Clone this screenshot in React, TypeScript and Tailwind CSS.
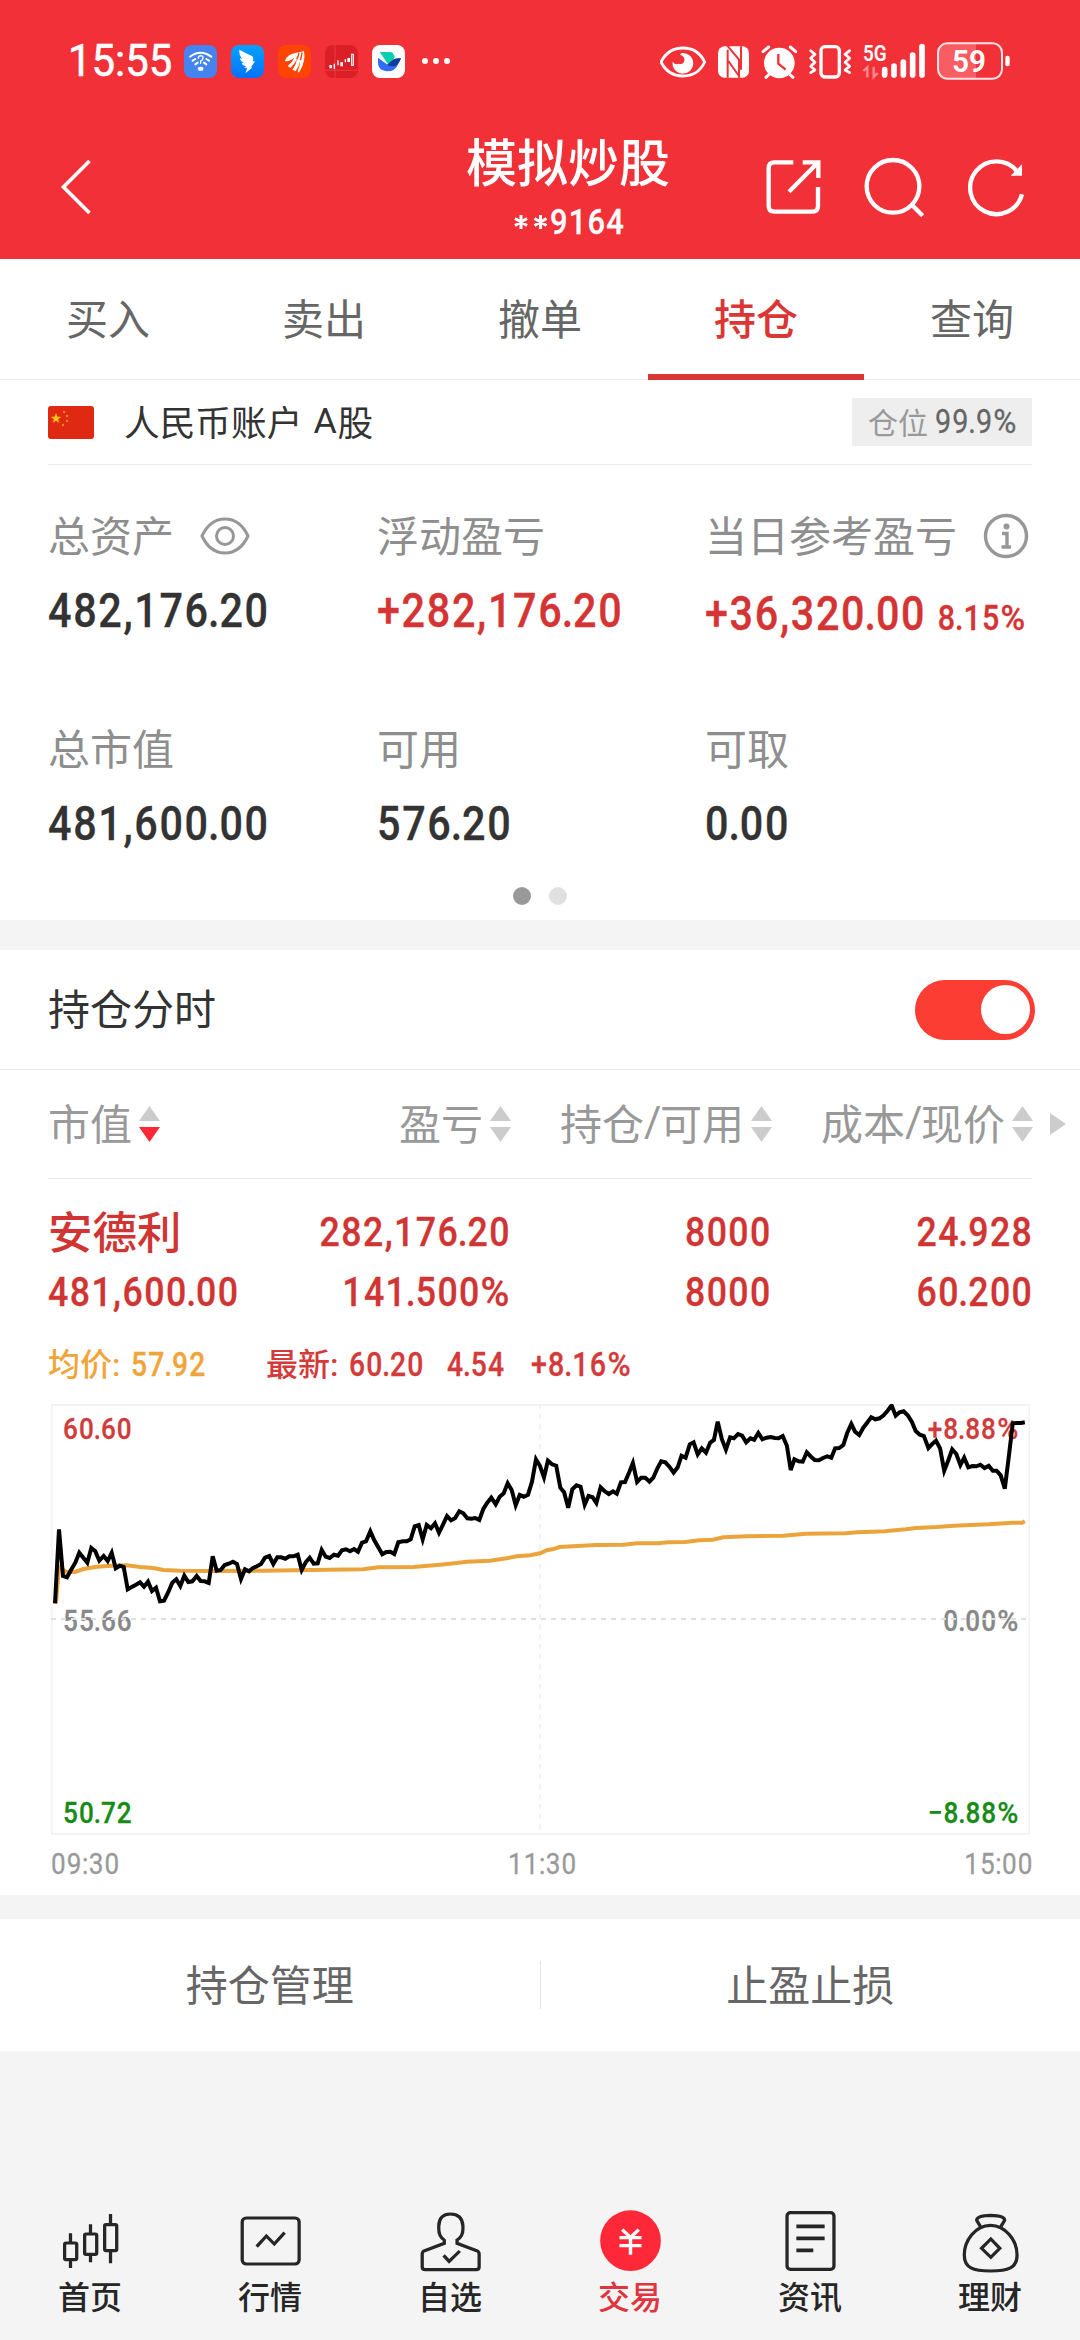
import React from 'react';
import type { ReactNode } from 'react';

type Point = [number, number];

/* Narrow DIN-like figures used for every amount in the app. */
function Num({ children, className = '', right = false }: { children: string; className?: string; right?: boolean }) {
  return (
    <span
      className={
        "inline-block scale-x-[0.87] whitespace-pre font-['Roboto','Noto_Sans_CJK_SC',sans-serif] tracking-[0.04em] [-webkit-text-stroke-width:0.3px] " +
        (right ? 'origin-right -mr-[0.04em] ' : 'origin-left ') +
        (className.includes('font-normal') ? '' : 'font-medium ') +
        className
      }
    >
      {children.split(/([.,%:+])/).map((part, i) => {
        if (part === '.') return <span key={i} className="-mx-[0.042em]">.</span>;
        if (part === ':') return <span key={i} className="-mx-[0.02em]">:</span>;
        if (part === '%') return <span key={i} className="mr-[0.07em] inline-block origin-left scale-x-[1.1]">%</span>;
        return part;
      })}
    </span>
  );
}

function StatusBar() {
  return (
    <div className="flex h-[122px] items-center pl-[68px] pr-[70px] text-white">
      <span className="w-[116px] shrink-0">
        <span className="inline-block origin-left scale-x-[0.93] font-['Roboto',sans-serif] text-[45px] leading-[62px] [-webkit-text-stroke-width:0.6px]">15:55</span>
      </span>
      <div className="flex items-center gap-[14px]">
        <svg width="33" height="33" viewBox="432 75 99 99">
          <rect x="432" y="75" width="99" height="99" rx="24" fill="#4583ee" />
          <g fill="none" stroke="#fff" strokeWidth="6" strokeLinecap="round">
            <path d="M450 110 Q481 86 514 110" />
            <path d="M458 122 L466 117 M466 133 L473 128 M507 122 L499 117 M499 133 L492 128" />
            <path d="M475 115 Q475 107 482 107 Q490 108 489 115 Q488 120 482 123 L482 130" strokeWidth="4" />
          </g>
          <path d="M473 143 Q482 137 491 143 L488 152 H476Z" fill="#fff" />
        </svg>
        <svg width="33" height="33" viewBox="574 75 99 99">
          <defs>
            <linearGradient id="wing" x1="0" y1="0" x2="0" y2="1">
              <stop offset="0" stopColor="#04a2ff" />
              <stop offset="1" stopColor="#0670fb" />
            </linearGradient>
          </defs>
          <rect x="574" y="75" width="99" height="99" rx="24" fill="url(#wing)" />
          <path d="M599 89 Q622 101 638 109 Q643 114 639 124 H646 L635 140 L637 143 L617 160 L623 143 L614 144 L619 138 Q608 137 606 130 L613 129 Q601 123 601 115 L608 116 Q597 105 599 89Z" fill="#fff" />
        </svg>
        <svg width="33" height="33" viewBox="714 75 99 99">
          <rect x="714" y="75" width="99" height="99" rx="24" fill="#ff4300" />
          <path d="M734 124 Q742 102 766 99 Q784 96 792 93 Q797 120 783 147 L776 158 L773 154 Q780 137 781 121 Q777 141 767 154 L757 149 Q768 136 771 118 Q762 134 751 144 L743 138 Q757 127 763 113 Q751 124 734 124Z" fill="#fff" />
          <path d="M777 99 Q775 109 770 118 M786 97 Q785 111 781 121" stroke="#ff4300" strokeWidth="4" fill="none" />
        </svg>
        <svg width="33" height="33" viewBox="855 75 99 99">
          <rect x="855" y="75" width="99" height="99" rx="24" fill="#dc1e26" />
          <path d="M855 151 H954 M885 75 V174" stroke="#e8454a" strokeWidth="2.500" />
          <path d="M872 135 V145 M905 127 V139 M926 114 V126" stroke="#fff" strokeWidth="8" />
          <path d="M883 131 V147 M894 121 V136 M916 118 V127" stroke="#fff" strokeWidth="4" />
          <rect x="935" y="103" width="5" height="33" fill="none" stroke="#fff" strokeWidth="3.500" />
        </svg>
        <svg width="33" height="33" viewBox="996 75 99 99">
          <rect x="996" y="75" width="99" height="99" rx="24" fill="#fff" />
          <path d="M1019 96 H1053 Q1063 101 1064 113 L1045 134Z" fill="#06cfb0" />
          <path d="M1014 113 Q1027 123 1043 134 L1059 119 Q1070 114 1083 115 Q1079 122 1075 131 Q1067 154 1040 154 Q1014 150 1014 130Z" fill="#326bf6" />
          <path d="M1041 135 L1058 120 Q1068 113 1083 115 Q1076 133 1068 137 Q1055 141 1041 135Z" fill="#133d9b" />
        </svg>
      </div>
      <div className="ml-[17px] flex gap-[5px]">
        <i className="size-[6px] rounded-full bg-white" />
        <i className="size-[6px] rounded-full bg-white" />
        <i className="size-[6px] rounded-full bg-white" />
      </div>
      <svg className="ml-auto" width="350" height="38" viewBox="57 65 1050 114" fill="none">
        <path d="M60 125 Q81 83 126 83 Q171 83 191 125 Q171 167 126 167 Q81 167 60 125Z" stroke="#fff" strokeWidth="8.500" />
        <path d="M122 98 A31 31 0 1 1 95 124 Q103 135 113 130 Q126 134 130 122 Q133 108 117 103Z" fill="#fff" />
        <rect x="231" y="78" width="93" height="94" rx="20" fill="#fff" />
        <path d="M259 76 L294 118 V172 M262 122 L296 170 M260 88 V172 M300 78 V148" stroke="#f23037" strokeWidth="6" />
        <circle cx="415" cy="128" r="46" fill="#fff" />
        <path d="M366 94 L383 80 M448 80 L464 94 M385 161 L375 171 M445 161 L456 171" stroke="#fff" strokeWidth="9" strokeLinecap="round" />
        <path d="M412 101 V130 L434 148" stroke="#f23037" strokeWidth="7" />
        <rect x="540" y="79" width="55" height="91" rx="12" stroke="#fff" strokeWidth="10" />
        <path d="M509 91 L522 102 L509 114 L522 126 L509 138 L522 149 L509 157 M626 91 L612 102 L626 114 L612 126 L626 138 L612 149 L626 157" stroke="#fff" strokeWidth="8" strokeLinecap="round" strokeLinejoin="round" />
        <text x="666" y="121" fill="#fff" fontFamily="Roboto" fontWeight="600" fontSize="66" textLength="71" lengthAdjust="spacingAndGlyphs">5G</text>
        <path d="M667 152 L679 141 V171 M698 140 V170 L710 158" stroke="#f88b8f" strokeWidth="7" />
        <path d="M731 148 V164 M759 137 V164 M787 125 V164 M815 104 V164 M843 79 V164" stroke="#fff" strokeWidth="17" strokeLinecap="round" />
        <path d="M1005 70 V174 H918 Q892 174 892 146 V98 Q892 70 918 70Z" fill="#f75d63" />
        <rect x="891" y="69" width="192" height="106" rx="28" stroke="#ffe3e4" strokeWidth="6" />
        <text x="933" y="155" fill="#fff" fontFamily="Roboto" fontWeight="600" fontSize="96" textLength="102" lengthAdjust="spacingAndGlyphs">59</text>
        <rect x="1093" y="106" width="13" height="32" rx="6" fill="#fff" />
      </svg>
    </div>
  );
}

function Header() {
  return (
    <header className="h-[259px] bg-[#f23037] text-white">
      <StatusBar />
      <div className="grid h-[130px] grid-cols-[403px_210px_1fr] items-center pl-[60px] pr-[55px]">
        <svg width="32" height="56" viewBox="0 0 32 56" fill="none" stroke="#fff" strokeWidth="3.6">
          <path d="M29.500 2 L3.500 28 L29.500 54" />
        </svg>
        <div className="flex w-[210px] flex-col items-center">
          <span className="whitespace-nowrap text-[51px] font-medium leading-[60px]">模拟炒股</span>
          <div className="mb-[-4px] mt-[6px] flex h-[52px] items-center pl-[2px]">
            <svg width="34" height="14" viewBox="0 0 34 14" stroke="#fff" strokeWidth="3">
              <path d="M7 0V14M1 3.500L13 10.500M1 10.500L13 3.500M26.500 0V14M20.500 3.500L32.500 10.500M20.500 10.500L32.500 3.500" />
            </svg>
            <span className="w-[76px] pl-[2px]">
              <Num className="text-[35.5px] leading-[52px]">9164</Num>
            </span>
          </div>
        </div>
        <div className="flex items-center justify-end gap-[43px]">
          <svg width="55" height="54" viewBox="74 60 165 162" fill="none" stroke="#fff" strokeWidth="13">
            <path d="M156 67 H99 Q82 67 82 84 V198 Q82 215 99 215 H213 Q230 215 230 198 V141" />
            <path d="M184 67 H231 V114 M231 67 L143 155" />
          </svg>
          <svg width="61" height="60" viewBox="370 49 183 180" fill="none" stroke="#fff" strokeWidth="13">
            <circle cx="457" cy="137" r="79" />
            <path d="M511 190 L546 225" />
          </svg>
          <svg width="57" height="59" viewBox="681 52 171 177" fill="none" stroke="#fff" strokeWidth="13">
            <path d="M843 161 A79 79 0 1 1 829 93" />
            <path d="M843 71 V105 H809Z" fill="#fff" stroke="none" />
          </svg>
        </div>
      </div>
    </header>
  );
}

function Tabs() {
  return (
    <nav className="grid h-[121px] grid-cols-5 border-b border-[#ebebeb] text-center text-[42px] leading-[115px] text-[#666]">
      {['买入', '卖出', '撤单', '持仓', '查询'].map((t) => (
        <div key={t} className={t === '持仓' ? 'border-b-[6px] border-[#d93635] font-medium text-[#d93635]' : ''}>
          {t}
        </div>
      ))}
    </nav>
  );
}

function Account() {
  return (
    <div className="mx-12 flex h-[85px] items-center border-b border-[#ebebeb]">
      <svg width="46" height="33" viewBox="0 0 46 33">
        <rect width="46" height="33" rx="3" fill="#df2912" />
        <path d="M8 7l1.300 3.800h4l-3.200 2.400 1.200 3.800L8 14.700 4.700 17l1.200-3.800-3.200-2.400h4z" fill="#f9c514" />
        <circle cx="16" cy="6" r="1.200" fill="#ef8a13" />
        <circle cx="19" cy="10" r="1.200" fill="#ef8a13" />
        <circle cx="19" cy="15" r="1.200" fill="#ef8a13" />
        <circle cx="15" cy="19" r="1.200" fill="#ef8a13" />
      </svg>
      <span className="ml-[30px] flex pb-[2px] text-[35.7px] leading-[60px] text-[#333]">
        人民币账户
        <span className="ml-[11px] inline-block w-[24px] font-['Roboto',sans-serif]">A</span>股
      </span>
      <div className="ml-auto flex h-12 w-[180px] items-center bg-[#eee] pl-[16px] text-[30px] leading-[44px] text-[#999]">
        <span className="pb-[3px]">仓位</span>
        <Num className="ml-[7px] text-[33px] font-normal text-[#666]">99.9%</Num>
      </div>
    </div>
  );
}

function Stat({ label, value, red, icon, extra }: { label: string; value: string; red?: boolean; icon?: ReactNode; extra?: string }) {
  return (
    <div>
      <div className="flex h-[60px] items-center whitespace-nowrap text-[42px] leading-[56px] text-[#8e8e8e]">
        <span className="pb-[4px]">{label}</span>
        {icon}
      </div>
      <div className={'mt-[15px] flex h-[59px] items-baseline whitespace-nowrap leading-[60px] ' + (red ? 'text-[#d43433] ' : 'text-[#333] ') + (extra ? 'pt-[3px]' : '')}>
        <span className={extra ? 'w-[231px] shrink-0' : ''}>
          <Num className="text-[47.5px]">{value}</Num>
        </span>
        {extra && <Num className="pl-[2px] text-[35px]">{extra}</Num>}
      </div>
    </div>
  );
}

const EyeIcon = (
  <svg className="ml-[26px]" width="50" height="38" viewBox="0 0 50 38" fill="none" stroke="#979797" strokeWidth="3">
    <path d="M2 19 Q10 2 25 2 Q40 2 48 19 Q40 36 25 36 Q10 36 2 19Z" />
    <circle cx="25" cy="19" r="8.500" />
  </svg>
);

const InfoIcon = (
  <svg className="mb-[1px] ml-[26px] shrink-0" width="46" height="46" viewBox="0 0 46 46" fill="none" stroke="#979797" strokeWidth="3.400">
    <circle cx="23" cy="23" r="20.500" />
    <path d="M19 20.500 H24 V34 M18.500 34 H28" />
    <circle cx="23.500" cy="13.500" r="3" fill="#979797" stroke="none" />
  </svg>
);

function Summary() {
  return (
    <section className="h-[455px] pl-12 pt-[41px]">
      <div className="grid grid-cols-[329px_328px_1fr] gap-y-[79px]">
        <Stat label="总资产" value="482,176.20" icon={EyeIcon} />
        <Stat label="浮动盈亏" value="+282,176.20" red />
        <Stat label="当日参考盈亏" value="+36,320.00" red icon={InfoIcon} extra="8.15%" />
        <Stat label="总市值" value="481,600.00" />
        <Stat label="可用" value="576.20" />
        <Stat label="可取" value="0.00" />
      </div>
      <div className="mr-12 mt-[34px] flex justify-center gap-[18px]">
        <i className="size-[18px] rounded-full bg-[#999]" />
        <i className="size-[18px] rounded-full bg-[#e0e0e0]" />
      </div>
    </section>
  );
}

function SortArrows({ active = false }: { active?: boolean }) {
  return (
    <svg className="ml-[7px] shrink-0" width="21" height="36" viewBox="0 0 21 36">
      <path d="M10.500 0 L21 15 H0Z" fill="#ccc" />
      <path d="M10.500 36 L21 21 H0Z" fill={active ? '#fc2836' : '#ccc'} />
    </svg>
  );
}

function ColumnHead({ label, className, active }: { label: string; className: string; active?: boolean }) {
  const [first, second] = label.split('/');
  return (
    <div className={'flex items-center ' + className}>
      <span className="flex pb-[5px]">
        {first}
        {second && <span className="w-[16px] font-['Roboto',sans-serif]">/</span>}
        {second}
      </span>
      <SortArrows active={active} />
    </div>
  );
}

function HoldingsTable() {
  return (
    <>
      <div className="flex h-[120px] items-center justify-between border-b border-[#ebebeb] pl-12 pr-[45px]">
        <span className="pb-[5px] text-[42px] leading-[60px] text-[#333]">持仓分时</span>
        <div className="flex h-[60px] w-[120px] items-center justify-end rounded-full bg-[#fc3d33] pr-[5px]">
          <i className="size-[49px] rounded-full bg-white" />
        </div>
      </div>
      <div className="ml-12 flex h-[108px] items-center text-[42px] leading-[60px] text-[#999]">
        <ColumnHead label="市值" className="w-[202px]" active />
        <ColumnHead label="盈亏" className="w-[261px] justify-end" />
        <ColumnHead label="持仓/可用" className="w-[261px] justify-end" />
        <ColumnHead label="成本/现价" className="w-[261px] justify-end" />
        <svg className="ml-[17px]" width="16" height="22" viewBox="0 0 16 22">
          <path d="M0 0 L16 11 L0 22Z" fill="#ccc" />
        </svg>
      </div>
      <div className="mx-12 grid grid-cols-[202px_259px_261px_262px] grid-rows-[60px_60px] border-t border-[#ebebeb] pt-[23px] text-[41px] leading-[60px] text-[#d03534]">
        <span className="-mt-[2px] text-[44.5px] font-medium">安德利</span>
        <Right>282,176.20</Right>
        <Right>8000</Right>
        <Right>24.928</Right>
        <Num>481,600.00</Num>
        <Right>141.500%</Right>
        <Right>8000</Right>
        <Right>60.200</Right>
      </div>
    </>
  );
}

function Right({ children }: { children: string }) {
  return (
    <span className="flex justify-end">
      <Num right>{children}</Num>
    </span>
  );
}

/* Intraday price, morning session. */
const priceAm: Point[] = [
  [75, 640], [87, 418], [99, 558], [111, 562], [123, 540], [136, 518], [148, 488], [160, 503], [172, 518], [184, 474], [196, 484], [208, 512], [221, 498], [233, 513], [245, 488], [257, 535], [269, 527], [281, 531], [293, 598], [305, 591], [318, 584], [330, 577], [342, 590], [354, 575], [366, 603], [378, 593], [390, 634], [402, 632], [414, 608], [427, 578], [439, 568], [451, 588], [463, 557], [475, 576], [487, 574], [500, 558], [512, 573], [524, 574], [536, 579], [548, 499], [560, 542], [572, 540], [584, 525], [596, 521], [609, 515], [621, 522], [633, 567], [645, 538], [657, 544], [669, 534], [681, 529], [693, 522], [705, 503], [718, 498], [730, 522], [742, 502], [754, 502], [766, 506], [778, 499], [790, 499], [803, 494], [815, 540], [827, 517], [839, 503], [851, 521], [863, 520], [875, 480], [887, 500], [899, 504], [912, 494], [924, 497], [936, 481], [948, 478], [960, 484], [972, 477], [984, 485], [996, 458], [1008, 454], [1021, 424], [1033, 451], [1045, 472], [1057, 493], [1069, 486], [1081, 485], [1093, 492], [1105, 457], [1118, 454], [1130, 454], [1142, 448], [1154, 409], [1166, 405], [1178, 448], [1190, 405], [1203, 415], [1215, 400], [1227, 428], [1239, 404], [1251, 378], [1263, 391], [1275, 385], [1288, 364], [1300, 370], [1312, 385], [1324, 386], [1336, 384], [1348, 390], [1360, 357], [1372, 338], [1384, 323], [1397, 343], [1409, 320], [1421, 310], [1433, 280], [1445, 300], [1457, 346], [1469, 315], [1481, 320], [1494, 314], [1506, 275], [1518, 208], [1530, 228], [1542, 262],
];

/* Intraday price, afternoon session. */
const pricePm: Point[] = [
  [81, 212], [93, 223], [105, 227], [117, 293], [128, 307], [140, 353], [152, 298], [164, 286], [176, 290], [188, 344], [199, 318], [211, 322], [222, 339], [234, 292], [246, 304], [258, 312], [270, 304], [281, 311], [293, 277], [305, 276], [317, 247], [328, 219], [340, 276], [352, 263], [364, 263], [376, 275], [387, 263], [399, 235], [410, 214], [422, 217], [434, 230], [446, 248], [458, 232], [469, 197], [481, 203], [493, 163], [504, 157], [516, 193], [528, 175], [540, 188], [552, 158], [563, 150], [574, 95], [586, 147], [598, 179], [610, 142], [621, 145], [633, 132], [645, 137], [657, 157], [669, 145], [680, 149], [692, 129], [704, 148], [716, 143], [728, 141], [740, 144], [751, 145], [763, 138], [775, 167], [786, 240], [797, 208], [809, 214], [821, 215], [833, 187], [845, 200], [856, 210], [868, 211], [880, 204], [892, 199], [904, 203], [915, 175], [927, 174], [939, 165], [950, 130], [962, 102], [973, 125], [985, 135], [997, 113], [1009, 97], [1020, 82], [1032, 88], [1044, 85], [1056, 76], [1067, 63], [1079, 46], [1091, 77], [1102, 67], [1114, 64], [1126, 76], [1138, 96], [1149, 123], [1161, 134], [1173, 138], [1186, 174], [1197, 162], [1208, 152], [1220, 175], [1232, 242], [1244, 210], [1255, 178], [1267, 192], [1279, 225], [1290, 203], [1302, 232], [1314, 228], [1325, 229], [1337, 224], [1349, 234], [1361, 227], [1373, 242], [1384, 242], [1396, 256], [1408, 296], [1419, 205], [1431, 100], [1443, 99], [1455, 99], [1466, 97],
];

const avgAm: Point[] = [
  [78, 640], [87, 530], [99, 540], [111, 546], [135, 546], [160, 537], [200, 530], [245, 527], [290, 526], [330, 531], [370, 534], [400, 540], [450, 542], [560, 543], [700, 542], [840, 540], [1000, 538], [1045, 532], [1150, 531], [1230, 524], [1280, 519], [1310, 515], [1380, 512], [1430, 505], [1460, 499], [1500, 496], [1530, 490],
];

const avgPm: Point[] = [
  [80, 480], [95, 478], [115, 471], [220, 465], [300, 464], [340, 460], [400, 460], [430, 457], [480, 456], [520, 451], [560, 449], [590, 442], [660, 439], [765, 437], [830, 431], [945, 430], [980, 427], [1060, 424], [1120, 418], [1150, 414], [1210, 411], [1260, 407], [1360, 403], [1430, 398], [1458, 398], [1466, 394],
];

/* Both sessions share one price axis; each keeps its own time origin and scale. */
function trace(am: Point[], pm: Point[]) {
  const left = am.map(([x, y]) => (x / 3 - 21).toFixed(1) + ',' + (y / 3 - 14).toFixed(1));
  const right = pm.map(([x, y]) => (x / 2.904 + 469).toFixed(1) + ',' + (y / 3 - 14).toFixed(1));
  return [...left, ...right].join(' ');
}

function ChartRow({ left, right, className }: { left: string; right: string; className: string }) {
  return (
    <div className={'flex h-[40px] justify-between text-[30px] leading-[42px] ' + className}>
      <Num>{left}</Num>
      <Num right>{right}</Num>
    </div>
  );
}

function Chart() {
  return (
    <section>
      <div className="ml-12 mt-[9px] flex h-[62px] text-[32px] leading-[62px] text-[#d43a3a]">
        <span className="w-[83px] font-medium text-[#f0a53a]">均价<span className="font-['Roboto',sans-serif]">:</span></span>
        <span className="w-[135px] text-[#f0a53a]"><Num className="text-[32.5px]">57.92</Num></span>
        <span className="w-[83px] font-medium">最新<span className="font-['Roboto',sans-serif]">:</span></span>
        <span className="w-[98px]"><Num className="text-[32.5px]">60.20</Num></span>
        <span className="w-[84px]"><Num className="text-[32.5px]">4.54</Num></span>
        <span><Num className="text-[33px]">+8.16%</Num></span>
      </div>
      <div className="relative mx-[51px] mt-[11px] flex h-[430px] w-[979px] flex-col justify-between pb-[2px] pl-[12px] pr-[12px] pt-[4px]">
        <ChartRow left="60.60" right="+8.88%" className="text-[#d03b3b]" />
        <ChartRow left="55.66" right="0.00%" className="text-[#888]" />
        <ChartRow left="50.72" right="−8.88%" className="text-[#168c16]" />
        <svg className="absolute left-0 top-0" width="979" height="431" viewBox="0 0 979 431" fill="none">
          <rect x="0.500" y="1" width="978" height="429" stroke="#f2f2f2" strokeWidth="2" />
          <path d="M0 215 H979" stroke="#dfdfdf" strokeWidth="2" strokeDasharray="5 5" />
          <path d="M489 0 V430" stroke="#f2f2f2" strokeWidth="2" strokeDasharray="5 5" />
          <polyline points={trace(avgAm, avgPm)} stroke="#eba43c" strokeWidth="4" />
          <polyline points={trace(priceAm, pricePm)} stroke="#000" strokeWidth="4" />
        </svg>
      </div>
      <div className="ml-[51px] mr-[48px] mt-[10px] flex h-[40px] justify-between text-[30px] leading-[40px] text-[#999]">
        <Num className="w-[80px] font-normal">09:30</Num>
        <Num className="-mr-[11px] w-[80px] font-normal">11:30</Num>
        <Num right className="font-normal">15:00</Num>
      </div>
    </section>
  );
}

function Actions() {
  return (
    <section className="flex h-[132px] items-center bg-white text-center text-[42px] leading-[60px] text-[#666]">
      <span className="flex-1 pb-[5px]">持仓管理</span>
      <i className="h-12 w-px bg-[#e4e4e4]" />
      <span className="flex-1 pb-[5px]">止盈止损</span>
    </section>
  );
}

const navItems: { label: string; view: string; icon: ReactNode }[] = [
  {
    label: '首页',
    view: '161 90 200 192',
    icon: (
      <>
        <rect x="186" y="189" width="35" height="50" rx="4" />
        <rect x="244" y="162" width="35" height="61" rx="4" />
        <rect x="302" y="134" width="35" height="78" rx="4" />
        <path d="M203 160V189M203 239V264M261 133V162M261 223V247M319 102V134M319 212V250" />
      </>
    ),
  },
  {
    label: '行情',
    view: '684 90 200 192',
    icon: (
      <>
        <rect x="702" y="114" width="165" height="138" rx="12" />
        <path d="M744 200 L772 168 L795 192 L825 158" />
      </>
    ),
  },
  {
    label: '自选',
    view: '1206 90 200 192',
    icon: (
      <>
        <path d="M1288 178 V190 L1231 212 Q1224 215 1224 222 V260 Q1224 269 1233 269 H1380 Q1389 269 1389 260 V222 Q1389 215 1382 212 L1325 190 V180 Q1342 170 1342 147 V138 Q1340 102 1306 102 Q1273 102 1272 138 V147 Q1272 170 1288 180" />
        <path d="M1286 226 L1302 244 L1333 213" />
      </>
    ),
  },
  {
    label: '交易',
    view: '161 90 200 192',
    icon: (
      <>
        <ellipse cx="261" cy="182" rx="88" ry="91" fill="#ff2838" stroke="none" />
        <path d="M237 149 L261 172 L285 149 M229 173 H293 M229 197 H293 M261 170 V224" stroke="#fff" strokeWidth="10" />
      </>
    ),
  },
  {
    label: '资讯',
    view: '684 90 200 192',
    icon: (
      <>
        <rect x="716" y="98" width="136" height="170" rx="10" />
        <path d="M743 139 H825 M743 175 H825 M743 211 H792" strokeWidth="11" />
      </>
    ),
  },
  {
    label: '理财',
    view: '1206 90 200 192',
    icon: (
      <>
        <path d="M1277 140 L1266 121 Q1266 107 1307 106 Q1348 107 1347 121 L1336 140" />
        <path d="M1306 136 C1262 136 1230 182 1230 225 C1230 264 1256 273 1306 273 C1357 273 1383 264 1383 225 C1383 182 1350 136 1306 136Z" />
        <path d="M1307 177 L1333 205 L1307 232 L1280 205Z" />
      </>
    ),
  },
];

function BottomNav() {
  return (
    <nav className="mt-auto grid h-[130px] grid-cols-6 text-[#262626]">
      {navItems.map((n) => (
        <div key={n.label} className={'flex flex-col items-center ' + (n.label === '交易' ? 'text-[#e0343f]' : '')}>
          <svg width="69" height="64" viewBox={n.view} preserveAspectRatio="none" fill="none" stroke="#262626" strokeWidth="9.500">
            {n.icon}
          </svg>
          <span className="mt-px text-[32px] font-medium leading-[40px]">{n.label}</span>
        </div>
      ))}
    </nav>
  );
}

export default function App() {
  return (
    <div className="flex h-[2340px] w-[1080px] flex-col overflow-hidden bg-[#f4f4f4] font-['Noto_Sans_CJK_SC',sans-serif]">
      <Header />
      <div className="h-[661px] bg-white">
        <Tabs />
        <Account />
        <Summary />
      </div>
      <div className="mt-[30px] h-[945px] bg-white">
        <HoldingsTable />
        <Chart />
      </div>
      <div className="mt-6">
        <Actions />
      </div>
      <BottomNav />
    </div>
  );
}
